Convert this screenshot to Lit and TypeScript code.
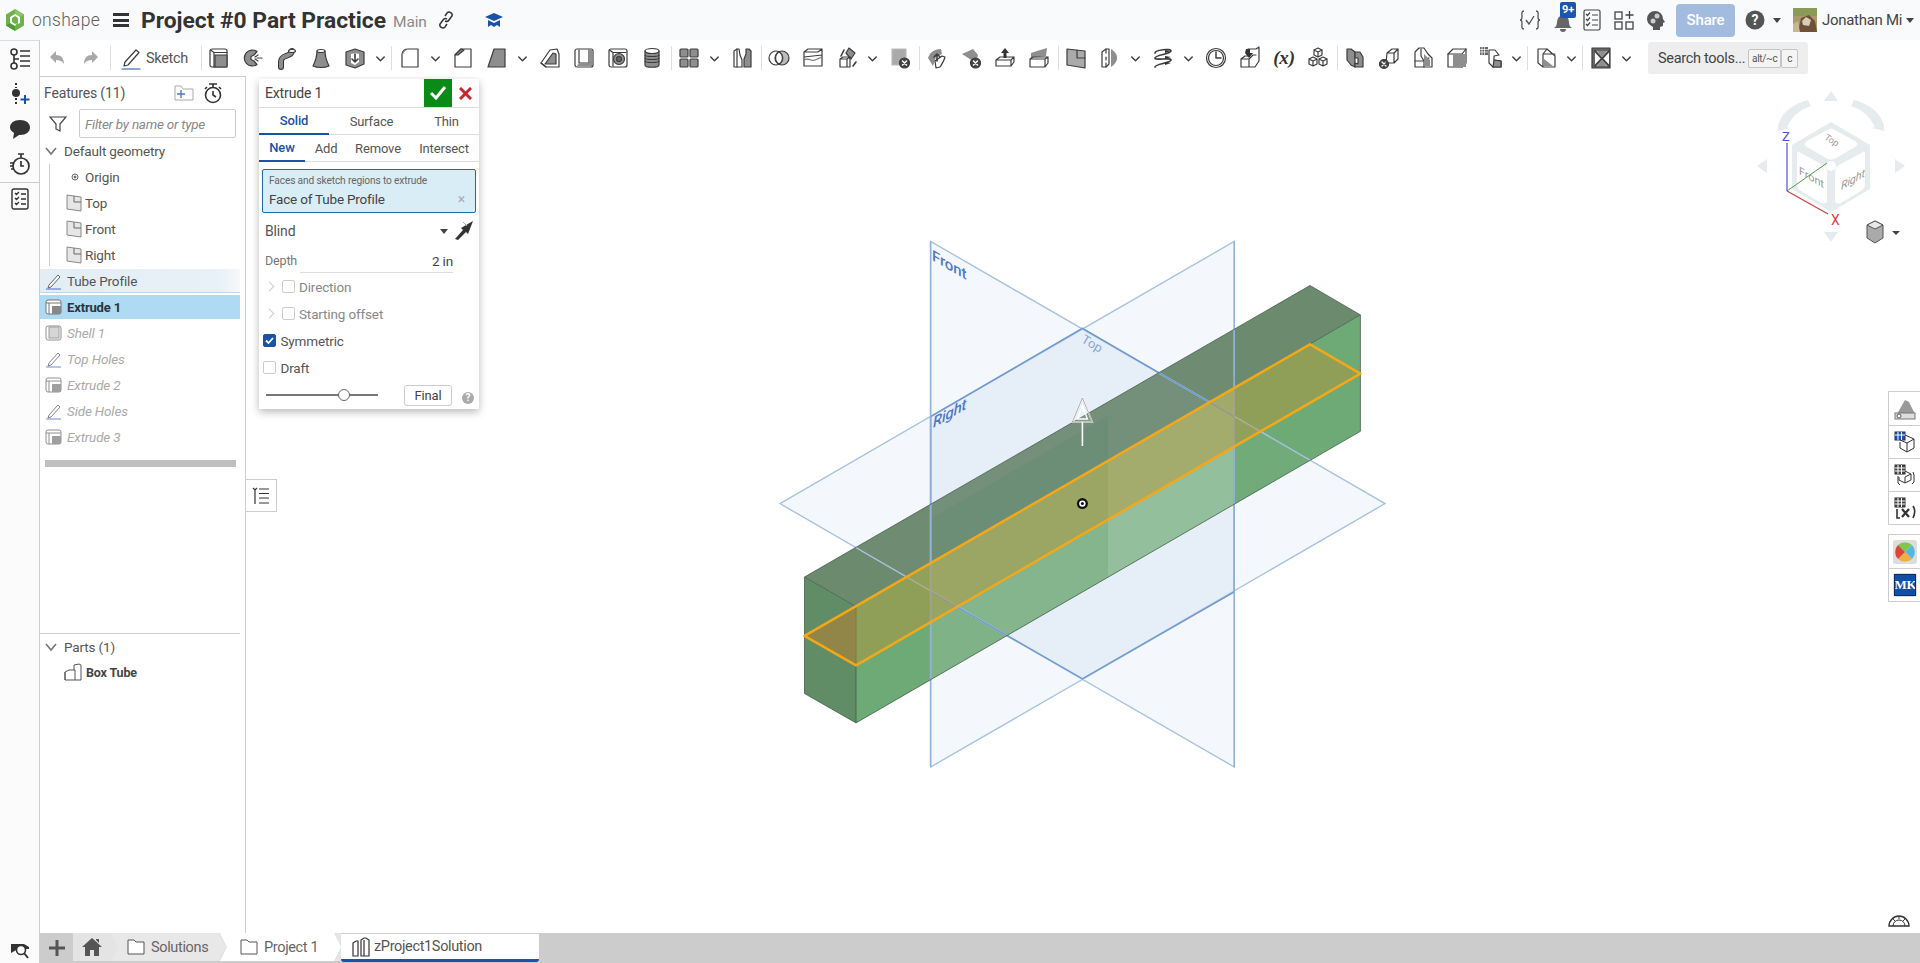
import { html, css, svg, LitElement } from 'lit'
import { customElement } from 'lit/decorators.js'

const icons: Record<string, unknown> = {
  undo: svg`<path fill="#a8a8a8" stroke="none" d="M5 11l6-6v4c5 0 8 3 8 9-2-3-4-4-8-4v3z"/>`,
  redo: svg`<path fill="#a8a8a8" stroke="none" d="M19 11l-6-6v4c-5 0-8 3-8 9 2-3 4-4 8-4v3z"/>`,
  extrude: svg`<rect x="3" y="3" width="17" height="18" rx="2"/><path d="M3.500 4l3.500 2.500H20M7 6.500V21"/><rect class="g" x="8" y="9" width="12" height="12"/>`,
  revolve: svg`<path class="g" d="M16 5.500a8 8 0 1 0 0 13l-3-3.500-3-1.500v-3l3-1.500z"/><path d="M14 11l3-2M14 13l3 2M16 12h5" stroke-dasharray="2 1"/>`,
  sweep: svg`<path d="M6 21v-5c0-4 2-5 5-6s6-2 6-5" fill="none" stroke="#333" stroke-width="6"/><path d="M6 21v-5c0-4 2-5 5-6s6-2 6-5" fill="none" stroke="#8e8e8e" stroke-width="4"/><ellipse class="w" cx="17" cy="5" rx="3.500" ry="1.500"/>`,
  loft: svg`<path class="g" d="M8 5c0 6-1 9-4 15 4 2 12 2 16 0-3-6-4-9-4-15z"/><ellipse class="w" cx="12" cy="5" rx="4" ry="1.500"/>`,
  thicken: svg`<path class="g" d="M3 6l9-3 9 3v12l-9 4-9-3z"/><path class="w" d="M8 8l4-1 4 1v8l-4 3-4-2z" stroke="none"/><path d="M12 8v8M9 13l3 3 3-3" stroke-width="1.600"/>`,
  fillet: svg`<path d="M4 8q1-5 6-5h10v18H4z"/><path class="g" stroke="none" d="M4 9q1-6 7-6h3c-5 0-8 2-9 6z"/>`,
  chamfer: svg`<path d="M4 9l6-6h10v18H4z"/><path class="g" d="M4 9l6-6 3 1-6 5z"/>`,
  draft: svg`<path class="g" d="M9 3h11v18H3z"/>`,
  rib: svg`<path d="M3 17l9-13 7-1 2 5v13H8z"/><path class="g" d="M7 18l8-11 3 1v10z"/><path d="M3 17l5 4"/>`,
  shell: svg`<rect x="3" y="3" width="18" height="18" rx="2"/><path d="M7 4v13h10V4"/><path class="g" stroke="none" d="M17 4h3v16H5l2-3h10z"/>`,
  hole: svg`<rect x="3" y="3" width="18" height="18" rx="2"/><path d="M3.500 4L7 6.500H20M7 6.500V20"/><circle class="g" cx="13" cy="13" r="5.500"/><circle cx="13" cy="13" r="2.500" fill="#666"/>`,
  cyl: svg`<path class="g" d="M5 5v14c0 3 14 3 14 0V5"/><ellipse class="w" cx="12" cy="5" rx="7" ry="2.500"/><path d="M5 9c0 2 14 2 14 0M5 12c0 2 14 2 14 0M5 15c0 2 14 2 14 0"/>`,
  pattern: svg`<rect class="g" x="3" y="3" width="8" height="8" rx="1"/><rect class="g" x="13" y="3" width="8" height="8" rx="1"/><rect class="g" x="3" y="13" width="8" height="8" rx="1"/><rect class="g" x="13" y="13" width="8" height="8" rx="1"/>`,
  mirror: svg`<path d="M4 21V5l3-2h2l1 6 2 5v7z"/><path class="g" d="M14 21V13l2-5V3h3l2 2v16z"/><path d="M7 3v18"/>`,
  boolean: svg`<circle cx="9" cy="12" r="7"/><circle class="g" cx="15" cy="12" r="7" fill-opacity=".6"/><path d="M12 6a7 7 0 0 1 0 12 7 7 0 0 1 0-12z" fill="#fff"/>`,
  split: svg`<path d="M3 6l4-3h14v6l-18 2zM3 6h14l4-3M3 6v14h18V9"/><path d="M3 14c5-3 7 2 11 0s5-2 7-3" stroke="#777"/>`,
  transform: svg`<path class="g" d="M14 2l6 5-4 6-5-6z"/><path d="M5 13l3-2h7v10H5zM5 13h7l3-2M12 13v8"/><path d="M6 10l3-6M18 20l3-4" stroke-width="1.600"/>`,
  del: svg`<path fill="#aaa" stroke="#bbb" d="M4 3h14v16H4z"/><circle cx="16.500" cy="17" r="5" fill="#444"/><path d="M14.500 15l4 4M18.500 15l-4 4" stroke="#fff" stroke-width="1.500"/>`,
  modify: svg`<path class="g" stroke="none" d="M3 12C5 6 10 3 16 3l1 5-6 3-3 9z"/><path class="w" d="M10 15l7-5 3 1c-1 4-3 7-5 10l-4 1z"/><path d="M12 8v7M9 11l3-3 3 3" stroke-width="1.600"/>`,
  delface: svg`<path class="g" stroke="none" d="M3 8l11-5 5 6-2 8z"/><circle cx="16.500" cy="17" r="5" fill="#444"/><path d="M14.500 15l4 4M18.500 15l-4 4" stroke="#fff" stroke-width="1.500"/>`,
  moveface: svg`<path d="M3 14l4-3h14v5l-3 4H3zM3 14v6M3 14h15v6M18 14l3-3"/><path class="d" d="M12 2l4 5h-2.500v5h-3V7H8z"/>`,
  replace: svg`<path class="g" stroke="none" d="M4 7l6-2 10-3-1 8-15 2z"/><path d="M3 13l3-2h15v6l-3 4H3zM3 13h15v8M18 13l3-2"/>`,
  plane: svg`<path fill="#aaa" d="M3 3l18 2v17L3 19z"/><path d="M13 4v8h8"/>`,
  wrap: svg`<path d="M4 6l4-3h3v15l-3 3H4z"/><path class="g" stroke="none" d="M13 3c4 3 6 5 6 9s-3 7-6 9z"/><path d="M8 3v4M8 11v3M8 17v4"/>`,
  helix: svg`<path d="M4 7c0-3 16-5 16-2s-16 4-16 7 16-1 16 2-16 4-16 7" stroke-width="1.700"/><path class="d" d="M14 4l6 1-6 2zM14 10l6 1-6 2zM14 16l6 1-6 2z"/>`,
  clock: svg`<circle cx="12" cy="12" r="9.500"/><circle cx="12" cy="12" r="7.500"/><path d="M12 6v6h5" stroke-width="1.500"/>`,
  insert: svg`<path d="M3 13l4-3h3V3h8l3-2v14l-4 6H3zM3 13h8v8M11 13l4-4h3"/><path class="d" d="M8 3h4v4h3l-4 5-4-5z"/>`,
  vars: svg`<text x="12" y="18" text-anchor="middle" class="fx">(x)</text>`,
  cubes: svg`<path d="M12 2l4 2v5l-4 2-4-2V4zM8 4l4 2 4-2M12 6v5M7 11l4 2v5l-4 2-4-2v-5zM3 13l4 2 4-2M7 15v5M17 11l4 2v5l-4 2-4-2v-5zM13 13l4 2 4-2M17 15v5"/>`,
  sheetf: svg`<path class="g" d="M4 3l4 0 4 3v15l-4-2-4-5z"/><path class="g" d="M12 6h5l3 5v10h-8v-4l3 1 0-6h-3z"/>`,
  sheetd: svg`<circle cx="7" cy="18" r="4.500" fill="#444"/><path d="M5 16l4 4M9 16l-4 4" stroke="#fff"/><path d="M10 7l5-4h6v10l-4 4H9zM10 7h7v10M17 7l4-4"/>`,
  flange: svg`<path d="M4 21V6l4-4h5l4 6 4 4v9z"/><path d="M4 15h9v6M13 15l5-3M10 3v7l3 5" /><path class="g" stroke="none" d="M13 8l6 6v6h-6z"/>`,
  cube: svg`<path d="M3 8l5-5h13v14l-4 4H3z"/><path d="M3 8h14v13M17 8l4-5"/><rect class="g" x="8" y="8" width="13" height="13" stroke="none"/>`,
  sheet: svg`<path class="m" stroke="none" d="M1 1h8v8H1z"/><path d="M3 1v8M5.500 1v8M1 3.500h8M1 6h8" stroke="#fff" stroke-width=".7"/><path d="M10 4h6l4 5-5 1v4l7 1v6h-8l-4-4z"/><path class="g" d="M15 14l7 1v6h-8z"/>`,
  tab: svg`<path d="M4 3h9l8 7v11H9l-5-4zM4 3v14M9 8l4-5M9 8v13M9 8h12"/><path class="g" stroke="none" d="M10 13l9 7h-9z"/>`,
  view: svg`<rect class="m" x="3" y="2" width="18" height="20"/><rect class="w" x="6" y="5" width="14" height="15" stroke="none"/><path d="M6 5l14 15M20 5L6 20" stroke="#444" stroke-width="2"/><path class="g" stroke="none" d="M8 5h10l-5 6zM8 20h10l-5-6z"/>`,
  caret: svg`<path d="M6 9.500l6 6 6-6" stroke-width="2.200"/>`,
}

const toolbar = [
  'undo', 'redo', '|', 'sketch', '|', 'extrude', 'revolve', 'sweep', 'loft', 'thicken', 'v', '|', 'fillet', 'v', 'chamfer',
  'draft', 'v', 'rib', 'shell', 'hole', 'cyl', '|', 'pattern', 'v', 'mirror', '|', 'boolean', 'split', 'transform', 'v', 'del', '|',
  'modify', 'delface', 'moveface', 'replace', '|', 'plane', 'wrap', 'v', 'helix', 'v', 'clock', 'insert', 'vars', 'cubes', '|',
  'sheetf', 'sheetd', 'flange', 'cube', 'sheet', 'v', '|', 'tab', 'v', '|', 'view', 'v',
]

const ic = (name: string) => html`<svg class="ic" viewBox="0 0 24 24">${icons[name]}</svg>`

const planeIcon = html`<svg class="row-ic" viewBox="0 0 18 18"><path d="M2 1l14 2v14L2 15z" fill="#e6e6e6" stroke="#888"/><path d="M9 2v6h7" fill="none" stroke="#666"/></svg>`
const sketchIcon = html`<svg class="row-ic" viewBox="0 0 18 18"><path d="M4 13L13 3l2 2-9 10-3 1z" fill="#fff" stroke="#666"/><path d="M1 17h15" stroke="#4d6fc0" stroke-width="1"/></svg>`
const extrudeIcon = html`<svg class="row-ic" viewBox="0 0 18 18"><rect x="1" y="2" width="15" height="14" rx="2" fill="#fff" stroke="#777"/><path d="M1 5h15M4 5v11" stroke="#777" fill="none"/><rect x="7" y="8" width="9" height="8" fill="#888"/></svg>`
const shellIcon = html`<svg class="row-ic" viewBox="0 0 18 18"><rect x="1" y="2" width="15" height="14" rx="2" fill="#fff" stroke="#777"/><rect x="4" y="3" width="10" height="11" fill="#ccc" stroke="#888"/></svg>`

const rolled = [
  { name: 'Shell 1', icon: shellIcon },
  { name: 'Top Holes', icon: sketchIcon },
  { name: 'Extrude 2', icon: extrudeIcon },
  { name: 'Side Holes', icon: sketchIcon },
  { name: 'Extrude 3', icon: extrudeIcon },
]

@customElement('app-root')
export class AppRoot extends LitElement {
  static styles = css`
    :host {
      display: block;
      width: 1920px;
      height: 963px;
      overflow: hidden;
      background: #fff;
      color: #555;
      font-family: Roboto, 'Liberation Sans', sans-serif;
      font-size: 13.500px;
      letter-spacing: -.15px;
    }
    .ic {
      width: 24px;
      height: 24px;
      fill: none;
      stroke: #3c3c3c;
      stroke-width: 1.2;
      stroke-linejoin: round;
      stroke-linecap: round;
      flex: none;
    }
    .g { fill: #8e8e8e; }
    .w { fill: #fff; }
    .d { fill: #333; stroke: none; }
    .m { fill: #666; }
    .fx { font: italic bold 19px 'Liberation Serif', serif; fill: #333; stroke: none; }

    .top {
      height: 40px;
      display: flex;
      align-items: center;
      background: #f9fafb;
      position: relative;
    }
    .logo { width: 20px; height: 24px; margin-left: 5px; flex: none; }
    .brand { font-size: 17.500px; font-weight: 300; color: #5f5f5f; margin-left: 7px; width: 81px; letter-spacing: .3px; }
    .burger { width: 16px; height: 14px; flex: none; border-top: 3px solid #333; border-bottom: 3px solid #333; position: relative; box-sizing: border-box; }
    .burger::after { content: ''; position: absolute; left: 0; right: 0; top: 2.500px; height: 3px; background: #333; }
    .title { font-size: 22.800px; font-weight: 700; color: #333; margin-left: 12px; white-space: nowrap; letter-spacing: 0; }
    .branch { font-size: 15.500px; color: #8a8a8a; margin-left: 7px; margin-top: 3px; }
    .tools-right { margin-left: auto; display: flex; align-items: center; height: 40px; }
    .share { width: 59px; height: 33px; background: #a3bbdf; color: #fff; border-radius: 4px; display: flex; align-items: center; justify-content: center; font-size: 15px; font-weight: 500; margin: 0 10px 0 10px; }
    .user { font-size: 15px; color: #444; margin-left: 5px; width: 84px; white-space: nowrap; letter-spacing: -.3px; }
    .tri { width: 0; height: 0; border: 4px solid transparent; border-top: 5px solid #444; border-bottom: 0; flex: none; }
    .bell { position: relative; width: 24px; height: 24px; margin-left: 9px; }
    .badge { position: absolute; left: 9px; top: -6px; width: 16px; height: 16px; border-radius: 2px; background: #1a56b0; color: #fff; font-size: 11px; font-weight: 700; text-align: center; line-height: 16px; }
    .top-ic { width: 20px; height: 20px; flex: none; }

    .body { display: flex; height: 923px; }
    .rail {
      width: 40px;
      flex: none;
      background: #fbfbfb;
      border-right: 1px solid #ccc;
      border-top: 1px solid #ddd;
      box-sizing: border-box;
      display: flex;
      flex-direction: column;
      align-items: center;
    }
    .rail-btn { height: 35px; width: 100%; display: flex; align-items: center; justify-content: center; flex: none; }
    .rail-sep { width: 100%; border-top: 1px solid #ccc; margin: 1px 0; }
    .rail-foot { margin-top: auto; height: 26px; display: flex; align-items: center; justify-content: center; }

    .content { flex: 1; display: flex; flex-direction: column; min-width: 0; }
    .toolbar { height: 36px; flex: none; display: flex; align-items: center; background: #fff; }
    .tool { width: 34px; height: 36px; display: flex; align-items: center; justify-content: center; flex: none; }
    .caret { width: 16px; margin-right: 3px; display: flex; justify-content: center; flex: none; }
    .caret .ic { width: 15px; height: 15px; }
    .sep { width: 1px; height: 24px; background: #ddd; flex: none; margin-left: 2px; }
    .caret + .sep { margin-left: 0; margin-right: 1px; }
    .sketch { display: flex; align-items: center; gap: 3px; padding-left: 8px; width: 88px; box-sizing: border-box; font-size: 14.500px; color: #555; flex: none; letter-spacing: -.3px; }
    .search { margin-left: 11px; width: 160px; height: 32px; background: #eee; border-radius: 3px; display: flex; align-items: center; padding-left: 10px; box-sizing: border-box; font-size: 14.500px; color: #444; flex: none; white-space: nowrap; letter-spacing: -.3px; }
    .kbd { border: 1px solid #c4c4c4; border-radius: 2px; background: #f4f4f4; font-size: 10px; height: 17px; line-height: 17px; text-align: center; box-sizing: content-box; color: #555; }
    .kbd.a { width: 31px; margin-left: 3px; }
    .kbd.b { width: 15px; }

    .main { flex: 1; display: flex; min-height: 0; }
    .panel {
      width: 206px;
      flex: none;
      border-top: 1px solid #ccc;
      border-right: 1px solid #ccc;
      box-sizing: border-box;
      display: flex;
      flex-direction: column;
      background: #fff;
    }
    .features { flex: 1; min-height: 0; }
    .feat-head { height: 32px; display: flex; align-items: center; padding-left: 4px; font-size: 14px; }
    .feat-head svg { flex: none; }
    .filter { height: 29px; display: flex; align-items: center; margin-bottom: 0; }
    .filter svg { width: 18px; height: 18px; margin: 0 12px 0 9px; flex: none; }
    .input { width: 157px; height: 29px; box-sizing: border-box; border: 1px solid #ccc; border-radius: 2px; font-style: italic; color: #888; font-size: 13.500px; display: flex; align-items: center; padding-left: 5px; white-space: nowrap; letter-spacing: -.25px; }
    .row { height: 26px; display: flex; align-items: center; white-space: nowrap; color: #555; font-size: 13.500px; }
    .row.group { padding-left: 4px; gap: 6px; }
    .tree { position: relative; }
    .tree::before { content: ''; position: absolute; left: 9px; top: 0; bottom: 2px; border-left: 1px solid #ccc; }
    .tree .row { padding-left: 25px; gap: 2px; }
    .row-ic { width: 18px; height: 18px; flex: none; }
    .feat { height: 24px; padding-left: 5px; gap: 4px; }
    .feat.tube { margin: 1px 5px 2px 0; background: linear-gradient(90deg, #e3edf5, #e8f1f7 90%, #f6f9fb); border-bottom: 1px solid #b5d9ef; height: 23px; }
    .feat.active { margin: 0 5px 1px 0; background: #aedaf3; font-weight: 700; color: #2a3440; font-size: 13px; }
    .feat.off { height: 26px; color: #aaa; font-style: italic; }
    .feat.off .row-ic { opacity: .8; }
    .scrollbar { height: 7px; margin: 10px 9px 0 5px; background: #c0c0c0; }
    .parts { height: 300px; flex: none; border-top: 1px solid #ccc; margin-right: 5px; box-sizing: border-box; }
    .parts .group { height: 25px; }
    .part { padding-left: 24px; gap: 4px; font-weight: 700; font-size: 12.500px; color: #444; }

    .viewport { flex: 1; position: relative; min-width: 0; overflow: hidden; }
    .scene { position: absolute; left: 0; top: 0; width: 1674px; height: 857px; }
    .scene text { font-family: Roboto, sans-serif; }

    .dialog {
      position: absolute;
      left: 13px;
      top: 3px;
      width: 220px;
      height: 330px;
      background: #fff;
      box-shadow: 0 3px 8px rgba(0, 0, 0, .28);
      font-size: 13px;
      color: #555;
    }
    .d-head { height: 28px; display: flex; align-items: center; border-bottom: 1px solid #ddd; box-sizing: content-box; padding-left: 6px; font-size: 14px; color: #444; }
    .ok { width: 28px; height: 28px; margin-left: auto; background: #0a8a16; display: flex; align-items: center; justify-content: center; }
    .cancel { width: 27px; display: flex; align-items: center; justify-content: center; }
    .tabs { display: flex; height: 26px; border-bottom: 1px solid #ddd; align-items: stretch; }
    .tabs > div { display: flex; align-items: center; justify-content: center; box-sizing: border-box; }
    .tabs .on { color: #1a52a8; border-bottom: 2px solid #1a52a8; margin-bottom: -1px; font-weight: 500; }
    .t-three > div:nth-child(1) { width: 70px; }
    .t-three > div:nth-child(2) { width: 85px; }
    .t-three > div:nth-child(3) { width: 65px; }
    .t-four > div:nth-child(1) { width: 46px; }
    .t-four > div:nth-child(2) { width: 42px; }
    .t-four > div:nth-child(3) { width: 62px; }
    .t-four > div:nth-child(4) { width: 70px; }
    .sel { margin: 7px 3px 0; height: 44px; box-sizing: border-box; border: 1px solid #1a6ea8; border-radius: 2px; background: #d9edf7; padding: 4px 6px; position: relative; }
    .sel small { display: block; font-size: 10.200px; color: #666; line-height: 14px; }
    .sel div { font-size: 13.500px; color: #444; margin-top: 3px; letter-spacing: -.2px; }
    .sel i { position: absolute; right: 10px; bottom: 5px; font-style: normal; color: #aac; font-size: 14px; }
    .blind { height: 28px; margin: 4px 5px 1px 6px; display: flex; align-items: center; font-size: 14px; position: relative; }
    .blind .tri { margin-left: auto; margin-right: 6px; }
    .depth { height: 27px; display: flex; align-items: center; padding: 2px 26px 0 6px; box-sizing: border-box; font-size: 12.500px; color: #777; position: relative; }
    .depth span { margin-left: auto; color: #444; font-size: 13.500px; }
    .depth::after { content: ''; position: absolute; left: 41px; right: 26px; bottom: 0; border-bottom: 1px solid #ddd; }
    .opt { height: 27px; display: flex; align-items: center; padding-left: 3.500px; gap: 4px; color: #555; font-size: 13.500px; }
    .opt.sub { color: #888; padding-left: 7px; gap: 3px; }
    .check { width: 11px; height: 11px; border: 1px solid #ccc; border-radius: 2px; flex: none; margin-right: 1px; }
    .check.on { border-color: #1a52a8; background: #1a52a8; display: flex; align-items: center; justify-content: center; }
    .arrow { width: 6px; height: 6px; border-top: 1.500px solid #ccc; border-right: 1.500px solid #ccc; transform: rotate(45deg); flex: none; margin-right: 6px; }
    .foot { display: flex; align-items: center; height: 24px; padding: 0 0 0 7px; margin-top: 2px; position: relative; }
    .slider { width: 112px; height: 2px; background: #777; position: relative; flex: none; }
    .slider::after { content: ''; position: absolute; left: 72px; top: -5px; width: 10px; height: 10px; border: 1px solid #666; background: #fff; border-radius: 50%; }
    .final { margin-left: 26px; width: 48px; height: 21px; box-sizing: border-box; border: 1px solid #ccc; border-radius: 3px; font-size: 13px; text-align: center; line-height: 19px; color: #444; }
    .help { width: 12px; height: 12px; border-radius: 50%; background: #aaa; color: #fff; font-size: 10px; font-weight: 700; line-height: 12px; text-align: center; margin-left: 10px; margin-top: 5px; }

    .toggle { position: absolute; left: -1px; top: 403px; width: 32px; height: 33px; background: #fff; border: 1px solid #ccc; border-left-color: #fff; box-sizing: border-box; display: flex; align-items: center; justify-content: center; }
    .side { position: absolute; right: 0; width: 32px; border: 1px solid #ccc; border-right: 0; box-sizing: border-box; background: #fff; }
    .side.a { top: 315px; }
    .side.b { top: 458px; }
    .side > div { height: 33px; display: flex; align-items: center; justify-content: center; box-sizing: border-box; }
    .side > div + div { border-top: 1px solid #ccc; }
    .app-tile { width: 24px; height: 24px; border-radius: 3px; background: #ddd; display: flex; align-items: center; justify-content: center; }
    .mk { width: 20px; height: 20px; background: #0f4fa8; color: #fff; font: 700 13px 'Liberation Serif', serif; text-align: center; line-height: 20px; outline: 1px solid #0a2f66; }
    .corner { position: absolute; right: 9px; bottom: 5px; width: 24px; height: 16px; }

    .tabbar { height: 30px; flex: none; background: #ccc; display: flex; align-items: flex-start; font-size: 14.500px; letter-spacing: -.35px; }
    .plus { width: 33px; height: 30px; display: flex; align-items: center; justify-content: center; color: #555; flex: none; }
    .crumbs { display: flex; height: 28px; background: #e4e4e4; flex: none; }
    .crumb { display: flex; align-items: center; gap: 6px; height: 28px; box-sizing: border-box; color: #666; }
    .crumb.home { width: 38px; padding-left: 9px; background: #e4e4e4; }
    .crumb.sol { width: 114px; padding-left: 16px; background: #e8e8e8; clip-path: polygon(0 0, calc(100% - 7px) 0, 100% 50%, calc(100% - 7px) 100%, 0 100%, 7px 50%); }
    .crumb.prj { width: 121px; padding-left: 20px; background: #fff; margin-left: -5px; clip-path: polygon(0 0, calc(100% - 7px) 0, 100% 50%, calc(100% - 7px) 100%, 0 100%, 7px 50%); }
    .doc-tab { width: 198px; height: 28px; background: #fff; border-bottom: 3px solid #1a52a8; border-radius: 0 0 3px 3px; display: flex; align-items: center; padding-left: 11px; box-sizing: border-box; gap: 4px; color: #555; margin-top: 1px; }
  `

  private renderToolbar() {
    return toolbar.map((t) => {
      if (t === '|') return html`<div class="sep"></div>`
      if (t === 'v') return html`<div class="caret">${ic('caret')}</div>`
      if (t === 'sketch') {
        return html`<div class="sketch">
          <svg class="ic" viewBox="0 0 24 24"><path d="M6 16L17 4l3 2.500L9 19l-4 1z"/><path d="M3 23h18" stroke="#1a52a8"/></svg>
          Sketch
        </div>`
      }
      return html`<div class="tool">${ic(t)}</div>`
    })
  }

  private renderTop() {
    return html`<div class="top">
      <svg class="logo" viewBox="0 0 20 24">
        <path d="M10 1l9 5.500v11L10 23l-9-5.500v-11z" fill="#6fb24a"/>
        <path d="M10 1l9 5.500-4 2.500-5-3z" fill="#8cc668"/>
        <path d="M1 17.500l4-2.500 5 3v5z" fill="#4f9a38"/>
        <path d="M10 6l5 3v6l-2 1V10l-3-2-3 2v4l3 2 2-1-2 3-5-3V9z" fill="#fff"/>
      </svg>
      <span class="brand">onshape</span>
      <div class="burger"></div>
      <span class="title">Project #0 Part Practice</span>
      <span class="branch">Main</span>
      <svg class="top-ic" style="margin-left:9px" viewBox="0 0 20 20" fill="none" stroke="#333" stroke-width="1.500">
        <path d="M9 6l2-3a3 3 0 0 1 5 3l-3 4a3 3 0 0 1-4 1M11 14l-2 3a3 3 0 0 1-5-3l3-4a3 3 0 0 1 4-1"/>
      </svg>
      <svg class="top-ic" style="margin-left:28px" viewBox="0 0 20 20">
        <path d="M10 3l9 4-9 4-9-4z" fill="#1a52a8"/>
        <path d="M4 10v7l3-2 3 2 3-2 3 2v-7l-6 3z" fill="#1a52a8"/>
      </svg>
      <div class="tools-right">
        <svg class="top-ic" style="width:24px;height:22px" viewBox="0 0 24 22" fill="none" stroke="#555" stroke-width="1.300">
          <path d="M6 2C3 2 4 5 4 8s-1 3-2 3c1 0 2 0 2 3s-1 6 2 6M18 2c3 0 2 3 2 6s1 3 2 3c-1 0-2 0-2 3s1 6-2 6M8 11l3 4 5-8"/>
        </svg>
        <div class="bell">
          <svg viewBox="0 0 24 24" width="24" height="24"><path d="M12 7a7 7 0 0 0-6 7c0 3-1 5-3 6h18c-2-1-3-3-3-6a7 7 0 0 0-6-7zM9 21a3 3 0 0 0 6 0z" fill="#666"/></svg>
          <div class="badge">9+</div>
        </div>
        <svg class="top-ic" style="margin-left:7px;height:22px" viewBox="0 0 20 22" fill="none" stroke="#444" stroke-width="1.200">
          <rect x="2" y="1" width="16" height="20" rx="1.500"/>
          <path d="M4 5l1.500 1.500L8 3.500M4 10l1.500 1.500L8 8.500M4 15l1.500 1.500L8 13.500M10 6h6M10 11h6M10 16h6"/>
        </svg>
        <svg class="top-ic" style="margin-left:12px" viewBox="0 0 20 20" fill="none" stroke="#444" stroke-width="1.300">
          <rect x="1" y="2" width="7" height="7"/><rect x="1" y="12" width="7" height="7"/><rect x="12" y="12" width="7" height="7"/>
          <path d="M15.500 1v8M11.500 5h8"/>
        </svg>
        <svg class="top-ic" style="margin-left:12px" viewBox="0 0 20 20">
          <path d="M9 1a8 8 0 0 1 8 8l2 3-2 1v3l-3 1v3H7v-3c-4-2-6-5-6-8a8 8 0 0 1 8-8z" fill="#555"/>
          <circle cx="11" cy="6" r="2.500" fill="#ccc"/><circle cx="7" cy="11" r="2.500" fill="#ccc"/>
        </svg>
        <div class="share">Share</div>
        <svg class="top-ic" viewBox="0 0 20 20">
          <circle cx="10" cy="10" r="9.500" fill="#555"/>
          <text x="10" y="15" text-anchor="middle" fill="#fff" font-size="14" font-weight="700" font-family="Roboto, sans-serif">?</text>
        </svg>
        <div class="tri" style="margin:0 12px 0 8px"></div>
        <svg class="top-ic" style="width:24px;height:24px" viewBox="0 0 24 24">
          <rect width="24" height="24" fill="#a89a6c"/>
          <path d="M0 0h24v8H0z" fill="#8c9a58"/>
          <path d="M5 24l3-14 8-3 6 6 2 11z" fill="#6e5238"/>
          <path d="M9 13l4-4 5 3-2 6-6-1z" fill="#d8cdb8"/>
          <path d="M0 16l5-3 2 11H0z" fill="#c8b890"/>
        </svg>
        <span class="user">Jonathan Mi</span>
        <div class="tri" style="margin-right:6px"></div>
      </div>
    </div>`
  }

  private renderRail() {
    return html`<div class="rail">
      <div class="rail-btn">
        <svg width="22" height="22" viewBox="0 0 22 22" fill="none" stroke="#333" stroke-width="1.600">
          <circle cx="5" cy="4" r="3"/><circle cx="5" cy="18" r="3"/><path d="M5 7v8M5 11h5M11 3h10M11 8h10M11 13h10M11 18h10" />
        </svg>
      </div>
      <div class="rail-btn">
        <svg width="22" height="24" viewBox="0 0 22 24">
          <circle cx="7" cy="11" r="4" fill="#333"/><path d="M7 1v5M7 16v7" stroke="#333" stroke-width="2" stroke-dasharray="2 2"/>
          <path d="M16 13v9M11.500 17.500h9" stroke="#1a52a8" stroke-width="2"/>
        </svg>
      </div>
      <div class="rail-btn">
        <svg width="22" height="22" viewBox="0 0 22 22"><path d="M11 2c6 0 10 3 10 7.500S17 17 11 17l-1 0-6 4 1-6C3 13.500 1 12 1 9.500 1 5 5 2 11 2z" fill="#333"/></svg>
      </div>
      <div class="rail-btn">
        <svg width="22" height="24" viewBox="0 0 22 24" fill="none" stroke="#333" stroke-width="1.700">
          <circle cx="12" cy="14" r="8"/><path d="M9 2h6M12 2v4M12 9v5h3M1 11h4M1 14h3M2 17h3"/>
        </svg>
      </div>
      <div class="rail-sep"></div>
      <div class="rail-btn" style="height:30px">
        <svg width="18" height="22" viewBox="0 0 18 22" fill="none" stroke="#333" stroke-width="1.400">
          <rect x="1" y="1" width="16" height="20" rx="2"/><path d="M4 5l1.500 1.500L8 4M4 10l1.500 1.500L8 9M4 15l1.500 1.500L8 14M10 6h5M10 11h5M10 16h5"/>
        </svg>
      </div>
      <div class="rail-foot">
        <svg width="20" height="18" viewBox="0 0 20 18">
          <path d="M1 3h13l5 3v2H8L1 12z" fill="#333"/><circle cx="11" cy="9" r="4.500" fill="#fff" stroke="#333" stroke-width="1.600"/><path d="M14 12l4 5" stroke="#333" stroke-width="2"/>
        </svg>
      </div>
    </div>`
  }

  private renderPanel() {
    return html`<div class="panel">
      <div class="features">
        <div class="feat-head">
          <span>Features (11)</span>
          <svg style="margin-left:49px" width="20" height="16" viewBox="0 0 20 16" fill="none" stroke="#aaa">
            <path d="M1 4V1h6l2 3h10v11H1z"/><path d="M7 5v8M3 9h8" stroke="#4a7cc0" stroke-width="1.400"/>
          </svg>
          <svg style="margin-left:9px" width="20" height="22" viewBox="0 0 20 22" fill="none" stroke="#333" stroke-width="1.600">
            <circle cx="10" cy="13" r="7.500"/><path d="M6 2h8M10 2v3M10 9v4l3 2M16 5l2 2M4 5L2 7"/>
          </svg>
        </div>
        <div class="filter">
          <svg viewBox="0 0 18 18" fill="none" stroke="#444" stroke-width="1.200"><path d="M1 2h16l-6 7v7l-4-2V9z"/></svg>
          <div class="input">Filter by name or type</div>
        </div>
        <div class="row group">
          <svg width="14" height="14" viewBox="0 0 14 14" fill="none" stroke="#777" stroke-width="1.600"><path d="M2 4l5 6 5-6"/></svg>
          Default geometry
        </div>
        <div class="tree">
          <div class="row">
            <svg class="row-ic" viewBox="0 0 18 18" fill="none" stroke="#666"><circle cx="10" cy="9" r="3"/><circle cx="10" cy="9" r="1" fill="#666"/></svg>
            Origin
          </div>
          <div class="row">${planeIcon} Top</div>
          <div class="row">${planeIcon} Front</div>
          <div class="row">${planeIcon} Right</div>
        </div>
        <div class="row feat tube">${sketchIcon} Tube Profile</div>
        <div class="row feat active">${extrudeIcon} Extrude 1</div>
        ${rolled.map((r) => html`<div class="row feat off">${r.icon} ${r.name}</div>`)}
        <div class="scrollbar"></div>
      </div>
      <div class="parts">
        <div class="row group">
          <svg width="14" height="14" viewBox="0 0 14 14" fill="none" stroke="#777" stroke-width="1.600"><path d="M2 4l5 6 5-6"/></svg>
          Parts (1)
        </div>
        <div class="row part">
          <svg class="row-ic" viewBox="0 0 18 18" fill="#fff" stroke="#555"><path d="M1 9l4-2h5V2l5-1 2 1v15H1zM10 7l1 0v10M1 9v8"/></svg>
          Box Tube
        </div>
      </div>
    </div>`
  }

  private renderScene() {
    return svg`
      <polygon points="780,503.600 1082.400,328.400 1385,503.600 1082.400,678.800" fill="#dfeaf4" fill-opacity=".3"/>
      <polygon points="930.600,241.400 1234.300,416.600 1234.300,767 930.600,591.800" fill="#dfeaf4" fill-opacity=".3"/>
      <polygon points="1234.300,241.400 930.600,416.600 930.600,767 1234.300,591.800" fill="#dfeaf4" fill-opacity=".3"/>

      <polygon points="804.500,577 856,606.500 1360.400,314.900 1310,285.500" fill="#6c8a6e"/>
      <polygon points="856,606.500 1360.400,314.900 1360.400,431.300 856,722.900" fill="#6eaa76"/>
      <polygon points="804.500,577 856,606.500 856,722.900 804.500,693.500" fill="#608c66"/>

      <polygon points="930.600,563.400 1108,460.900 1108,577.300 930.600,679.800" fill="#fff" fill-opacity=".1"/>
      <polygon points="1108,460.900 1234.300,388 1234.300,504.400 1108,577.300" fill="#fff" fill-opacity=".22"/>
      <polygon points="930.600,519 1108,416 1108,460.900 930.600,563.400" fill="#3f7a58" fill-opacity=".18"/>

      <polygon points="780,503.600 1082.400,328.400 1385,503.600 1082.400,678.800" fill="#dfeaf4" fill-opacity=".03" stroke="#a9c2e2" stroke-width="1.400"/>
      <polygon points="930.600,241.400 1234.300,416.600 1234.300,767 930.600,591.800" fill="#dfeaf4" fill-opacity=".03" stroke="#a9c2e2" stroke-width="1.400"/>
      <polygon points="1234.300,241.400 930.600,416.600 930.600,767 1234.300,591.800" fill="#dfeaf4" fill-opacity=".03" stroke="#a9c2e2" stroke-width="1.400"/>
      <path d="M930.600 416.600L1082.400 328.400L1234.300 416.600V591.800L1082.400 678.800L930.600 591.800z" fill="none" stroke="#6f9ad0" stroke-width="1.400"/>
      <path d="M930.600 241.400V767M1234.300 241.400V767" stroke="#8fb0d8" stroke-width="1.400"/>

      <path d="M856 606.500l504.400-291.600M804.500 577L856 606.500V722.900L804.500 693.500zM856 722.900l504.400-291.600V314.900L1310 285.500 804.500 577" fill="none" stroke="#3f5a45" stroke-width="1" stroke-opacity=".75"/>

      <polygon points="804.500,635.900 856,665.300 1360.400,373.700 1310,344.300" fill="#b79333" fill-opacity=".45"/>
      <polygon points="804.500,635.900 856,606.500 856,665.300" fill="#b06a30" fill-opacity=".25"/>
      <polygon points="804.500,635.900 856,665.300 1360.400,373.700 1310,344.300" fill="none" stroke="#f2a818" stroke-width="2.500" stroke-linejoin="round"/>

      <text transform="matrix(1 .577 0 1 932 260)" fill="#4f78c8" font-size="15" font-weight="500">Front</text>
      <text transform="matrix(1 -.577 0 1 933 428)" fill="#4f78c8" font-size="15" font-weight="500" font-style="italic">Right</text>
      <text transform="matrix(.85 .5 -.3 .85 1081 342)" fill="#8aa4d8" font-size="14" font-style="italic">Top</text>

      <path d="M1082.400 398l-10 24h20zM1082.400 406l-5 13h10z" fill="#ffffff" fill-opacity=".12" stroke="#fff" stroke-width="1.400"/>
      <path d="M1082.400 398l-10 24h20z" fill="none" stroke="#777" stroke-width=".6"/>
      <path d="M1082.400 422v24" stroke="#fff" stroke-width="1.600"/>
      <circle cx="1082.400" cy="503.600" r="5.500" fill="#111"/>
      <circle cx="1082.400" cy="503.600" r="3.200" fill="#fff"/>
      <circle cx="1082.400" cy="503.600" r="1.500" fill="#111"/>

      <g fill="#e6ebee">
        <path d="M1831 91l7 10h-14zM1831 242l7-10h-14zM1757 166l10-7v14zM1905 166l-10-7v14z"/>
        <path d="M1778 125c4-12 14-21 30-25l3 6c-12 4-19 11-24 21l3 1-12 3z"/>
        <path d="M1884 125c-4-12-14-21-30-25l-3 6c12 4 19 11 24 21l-3 1 12 3z"/>
        <path d="M1831 122l39 23v44l-39 23-39-23v-44z"/>
      </g>
      <g fill="#fff">
        <path d="M1831 128l24 13c3 2 3 4 0 6l-19 11c-3 2-7 2-10 0l-19-11c-3-2-3-4 0-6z"/>
        <path d="M1799 152l24 13c3 2 4 4 4 8v27c0 4-3 4-6 3l-20-12c-3-2-4-4-4-8v-27c0-4 0-5 2-4z"/>
        <path d="M1863 152l-24 13c-3 2-4 4-4 8v27c0 4 3 4 6 3l20-12c3-2 4-4 4-8v-27c0-4 0-5-2-4z"/>
      </g>
      <circle cx="1831" cy="166" r="5" fill="#fff"/>
      <path d="M1787 191l40-28" stroke="#4aa04a" stroke-width="1"/>
      <path d="M1787 191l41 23" stroke="#d04040" stroke-width="1.200"/>
      <path d="M1787 191v-48" stroke="#4a54d8" stroke-width="1.200"/>
      <text x="1782" y="141" fill="#4a54d8" font-size="13">Z</text>
      <text x="1831" y="225" fill="#d84040" font-size="14">X</text>
      <text transform="matrix(.8 .5 -.4 .8 1824 139)" fill="#999" font-size="10" font-style="italic">Top</text>
      <text transform="matrix(1 .577 0 1 1799 174)" fill="#999" font-size="11">Front</text>
      <text transform="matrix(1 -.577 0 1 1841 190)" fill="#999" font-size="11" font-style="italic">Right</text>
      <path d="M1867 225l8-4 8 4v13l-8 5-8-5z" fill="#aaa" stroke="#555"/>
      <path d="M1867 225l8 4 8-4-8-4z" fill="#e8e8e8" stroke="#555"/>
      <path d="M1892 231h8l-4 4z" fill="#444"/>
    `
  }

  render() {
    return html`
      ${this.renderTop()}
      <div class="body">
        ${this.renderRail()}
        <div class="content">
          <div class="toolbar">
            ${this.renderToolbar()}
            <div class="search">Search tools...<span class="kbd a">alt/~c</span><span class="kbd b">c</span></div>
          </div>
          <div class="main">
            ${this.renderPanel()}
            <div class="viewport">
              <svg class="scene" viewBox="246 76 1674 857">${this.renderScene()}</svg>

              <div class="dialog">
                <div class="d-head">
                  Extrude 1
                  <div class="ok">
                    <svg width="18" height="16" viewBox="0 0 18 16" fill="none" stroke="#fff" stroke-width="3"><path d="M2 8l5 5L16 2"/></svg>
                  </div>
                  <div class="cancel">
                    <svg width="13" height="13" viewBox="0 0 13 13" stroke="#c8262c" stroke-width="3"><path d="M1 1l11 11M12 1L1 12"/></svg>
                  </div>
                </div>
                <div class="tabs t-three"><div class="on">Solid</div><div>Surface</div><div>Thin</div></div>
                <div class="tabs t-four"><div class="on">New</div><div>Add</div><div>Remove</div><div>Intersect</div></div>
                <div class="sel">
                  <small>Faces and sketch regions to extrude</small>
                  <div>Face of Tube Profile</div>
                  <i>×</i>
                </div>
                <div class="blind">
                  Blind
                  <div class="tri"></div>
                  <svg width="20" height="20" viewBox="0 0 20 20"><path d="M19 0l-5 13-2-2-8 8-3-1 8-9-2-2z" fill="#333"/><path d="M9 1l4 4" stroke="#aaa"/></svg>
                </div>
                <div class="depth">Depth<span>2 in</span></div>
                <div class="opt sub"><div class="arrow"></div><div class="check"></div>Direction</div>
                <div class="opt sub"><div class="arrow"></div><div class="check"></div>Starting offset</div>
                <div class="opt">
                  <div class="check on"><svg width="9" height="9" viewBox="0 0 9 9" fill="none" stroke="#fff" stroke-width="1.800"><path d="M1 4.500l2.500 2.500L8 2"/></svg></div>
                  Symmetric
                </div>
                <div class="opt"><div class="check"></div>Draft</div>
                <div class="foot">
                  <div class="slider"></div>
                  <div class="final">Final</div>
                  <div class="help">?</div>
                </div>
              </div>

              <div class="toggle">
                <svg width="18" height="18" viewBox="0 0 18 18" fill="none" stroke="#333" stroke-width="1.200">
                  <path d="M1 1l2 2 2-2M3 3v14M7 2h10M7 6.500h10M7 11h10M7 16h10"/>
                </svg>
              </div>

              <div class="side a">
                <div>
                  <svg width="24" height="24" viewBox="0 0 24 24"><path d="M4 17L12 3l4 2 6 12z" fill="#999"/><rect x="2" y="16" width="20" height="6" fill="#ddd" stroke="#777"/><circle cx="6" cy="19" r="2" fill="#fff" stroke="#555"/></svg>
                </div>
                <div>
                  <svg width="24" height="24" viewBox="0 0 24 24" fill="none" stroke="#333"><rect x="2" y="2" width="10" height="8" fill="#1a52c8"/><path d="M5 2v8M8.500 2v8M2 5h10" stroke="#fff"/><path d="M12 5l9 4v9l-7 4-7-4v-6M21 9l-7 4v9M14 13l-7-3"/></svg>
                </div>
                <div>
                  <svg width="24" height="24" viewBox="0 0 24 24" fill="none" stroke="#333"><rect x="2" y="2" width="10" height="9" fill="#444"/><path d="M5 2v9M8.500 2v9M2 5h10M2 8h10" stroke="#fff"/><path d="M12 8l6 3v6l-6 3-6-3v-3M18 11l-6 3v6M5 13v7l2 2M20 9l1 3v7l-2 2"/></svg>
                </div>
                <div>
                  <svg width="24" height="24" viewBox="0 0 24 24" fill="none" stroke="#333"><rect x="2" y="2" width="10" height="9" fill="#444"/><path d="M5 2v9M8.500 2v9M2 5h10M2 8h10" stroke="#fff"/><path d="M4 13v9h3M20 10c2 3 2 8 0 12" stroke-width="1.600"/><path d="M9 13l7 8M16 13l-7 8" stroke-width="2.200"/></svg>
                </div>
              </div>

              <div class="side b">
                <div>
                  <div class="app-tile">
                    <svg width="20" height="20" viewBox="0 0 20 20">
                      <path d="M10 10L3 3a10 10 0 0 1 14 0z" fill="#7ec850"/><path d="M10 10l7-7a10 10 0 0 1 0 14z" fill="#52b8e0"/>
                      <path d="M10 10l7 7a10 10 0 0 1-14 0z" fill="#f0b040"/><path d="M10 10l-7 7a10 10 0 0 1 0-14z" fill="#d84838"/>
                    </svg>
                  </div>
                </div>
                <div><div class="app-tile"><div class="mk">MK</div></div></div>
              </div>

              <svg class="corner" viewBox="0 0 24 16" fill="none" stroke="#333">
                <path d="M2 14a10 10 0 0 1 20 0z" stroke-width="1.400"/><path d="M6 14a6 6 0 0 1 12 0M12 4v3M6 7l2 2M18 7l-2 2"/>
              </svg>
            </div>
          </div>
          <div class="tabbar">
            <div class="plus">
              <svg width="16" height="16" viewBox="0 0 16 16" stroke="#555" stroke-width="3"><path d="M8 0v16M0 8h16"/></svg>
            </div>
            <div class="crumbs">
              <div class="crumb home">
                <svg width="20" height="20" viewBox="0 0 20 20"><path d="M10 1l10 9h-3v9h-5v-6H8v6H3v-9H0zM14 2h3v4l-3-3z" fill="#555"/></svg>
              </div>
              <div class="crumb sol">
                <svg width="18" height="16" viewBox="0 0 18 16" fill="#fff" stroke="#555"><path d="M1 15V1h6l2 2h8v12z"/></svg>
                Solutions
              </div>
              <div class="crumb prj">
                <svg width="18" height="16" viewBox="0 0 18 16" fill="#fff" stroke="#555"><path d="M1 15V1h6l2 2h8v12z"/></svg>
                Project 1
              </div>
            </div>
            <div class="doc-tab">
              <svg width="18" height="20" viewBox="0 0 18 20" fill="none" stroke="#333" stroke-width="1.200"><path d="M1 19V6l3-2h2v15zM6 19V6M9 19V3l3-2h2l3 2v16zM12 19V3"/></svg>
              zProject1Solution
            </div>
          </div>
        </div>
      </div>
    `
  }
}

declare global {
  interface HTMLElementTagNameMap {
    'app-root': AppRoot
  }
}
